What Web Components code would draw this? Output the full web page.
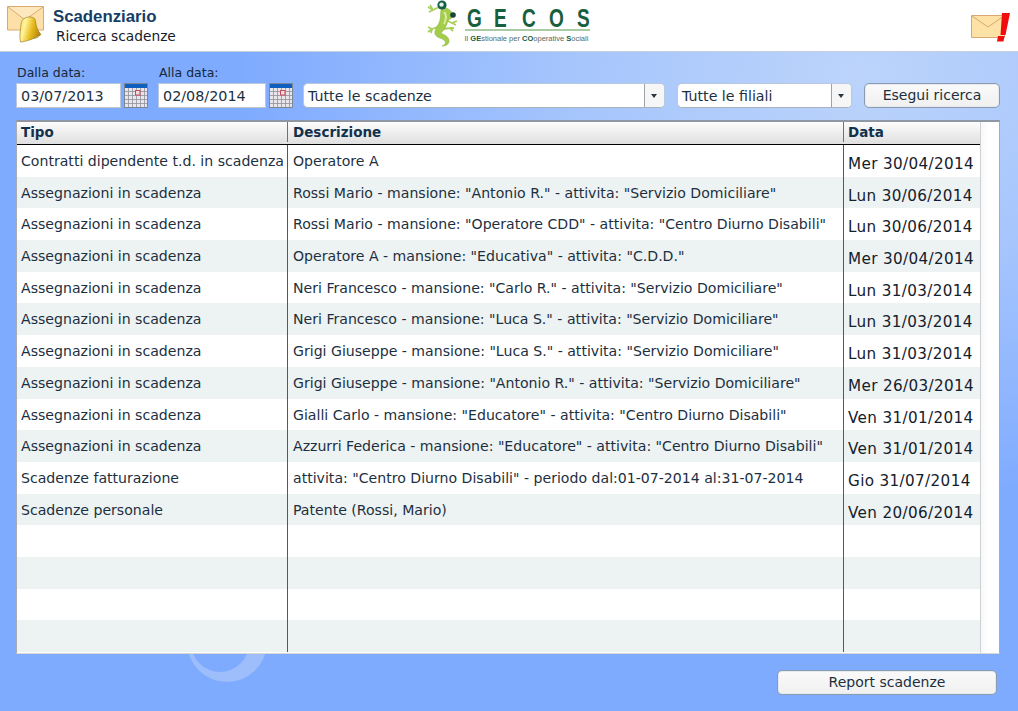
<!DOCTYPE html>
<html lang="it">
<head>
<meta charset="utf-8">
<title>Scadenziario</title>
<style>
    html, body { margin: 0; height: 100%; }
    body { font-family: "DejaVu Sans", Verdana, sans-serif; color: #1c2f3f; overflow: hidden; }
</style>
</head>
<body>
<gecos-app></gecos-app>

<script>
class AppHeader extends HTMLElement {
    constructor() {
        super();
        this.attachShadow({ mode: 'open' });
        this.shadowRoot.innerHTML = `
            <style>
                :host {
                    display: grid;
                    grid-template-columns: 1fr auto 1fr;
                    align-items: start;
                    height: 51px;
                    background: #fff;
                    border-bottom: 1px solid #c4d0e0;
                }
                .left { display: flex; padding: 5px 0 0 7px; }
                .titles { margin-left: 8px; }
                h1 { margin: 2px 0 0; font: bold 16.8px/19px "Liberation Sans", Arial, sans-serif; color: #153e66; }
                p { margin: 1px 0 0 3px; font-size: 13.75px; line-height: 18px; color: #16202a; }
                .logo { display: flex; align-items: flex-start; gap: 7px; margin-left: -3px; }
                .brand { padding-top: 6px; width: 125px; }
                .letters { display: flex; justify-content: space-between; height: 23px; font: bold 26.5px/25px "Liberation Sans", Arial, sans-serif; color: #17603d; border-bottom: 2px solid #a9cba4; }
                .letters span { display: block; width: 15px; text-align: center; transform: scaleX(.72); }
                .tag { font: 7.5px/10px "Liberation Sans", Arial, sans-serif; color: #5b6b62; margin-top: 3px; white-space: nowrap; }
                .tag b { color: #17603d; }
                .right { justify-self: end; padding: 12px 8px 0 0; }
                svg { display: block; }
            </style>
            <div class="left">
                <svg width="38" height="38" viewBox="0 0 38 38">
                    <defs>
                        <linearGradient id="gold" x1="0" y1="0" x2="1" y2=".3">
                            <stop offset="0" stop-color="#f8e26a"/>
                            <stop offset=".3" stop-color="#fff39a"/>
                            <stop offset=".65" stop-color="#e8bb1e"/>
                            <stop offset="1" stop-color="#b98c10"/>
                        </linearGradient>
                    </defs>
                    <path d="M.5 1.500h36v23.500h-36z" fill="#fde0a8" stroke="#d9ab72"/>
                    <path d="M1 2l17 13 18-13" fill="#fde8bd" stroke="#d9ab72"/>
                    <path d="M23 12c3 0 5 1 5.500 4 .5 5 2 10 5.500 13.500-5 3.500-14 7-20.500 7.500-1-5-.5-9 0-13 .5-5 1-9 3-10 2-1.500 4-2 6.500-2z" fill="url(#gold)" stroke="#8f7210" stroke-width=".6"/>
                    <path d="M27 33c2.500.5 5-1 5.500-3l-3.500 1.500z" fill="#d6c66a" stroke="#8f7210" stroke-width=".6"/>
                </svg>
                <div class="titles">
                    <h1>Scadenziario</h1>
                    <p>Ricerca scadenze</p>
                </div>
            </div>
            <div class="logo">
                <svg width="32" height="47" viewBox="7 2 32 47">
                    <path d="M20 9l-6 3-5-3M14 12l-4 2M14 12l-3-5" fill="none" stroke="#a9d15a" stroke-width="1.800"/>
                    <path d="M21 28l-8 3-4-2M13 31l-4 3M13 31l-1 4" fill="none" stroke="#a9d15a" stroke-width="1.800"/>
                    <path d="M27 22l6 3 5-2M33 25l4 2M24 31l7-1 3 3M31 30l4 0" fill="none" stroke="#a9d15a" stroke-width="1.800"/>
                    <path d="M23 9c4 0 9 3 11 7 1 3-2 5-5 6-1 6-4 10-7 13 3 2 8 3 8 8 0 4-4 5-7 5 3-1 4-3 3-5-2-3-9-3-10-7-1-5 4-9 5-14 1-4 0-9 2-13z" fill="#a5cd4c" stroke="#86ac38" stroke-width=".5"/>
                    <path d="M25 14c2 2 3 6 0 12" fill="none" stroke="#d8eca0" stroke-width="2"/>
                    <circle cx="23" cy="7" r="4.600" fill="#15604a"/>
                    <circle cx="22.500" cy="6.600" r="2.200" fill="#e4f1ea"/>
                    <circle cx="34" cy="17" r="2.800" fill="#15453a"/>
                </svg>
                <div class="brand">
                    <div class="letters"><span>G</span><span>E</span><span>C</span><span>O</span><span>S</span></div>
                    <div class="tag">Il <b>GE</b>stionale per <b>CO</b>operative <b>S</b>ociali</div>
                </div>
            </div>
            <div class="right">
                <svg width="40" height="30" viewBox="0 0 40 30">
                    <path d="M1.500 3.500h33v22h-33z" fill="#fde1a5" stroke="#d5a873"/>
                    <path d="M2 4l16 11 16-11" fill="none" stroke="#d5a873"/>
                    <path d="M32 1h8l-4.500 22h-5zM28 24h6.500l-1 5.500h-6.500z" fill="#f10d0d"/>
                </svg>
            </div>
        `;
    }
}

class DateField extends HTMLElement {
    constructor() {
        super();
        this.attachShadow({ mode: 'open' });
        this.shadowRoot.innerHTML = `
            <style>
                :host { display: block; }
                label { display: block; font-size: 12.5px; line-height: 15px; padding-left: 1px; color: #14283a; }
                .row { display: flex; gap: 3px; margin-top: 3px; }
                input {
                    width: var(--w, 105px); height: 25px; box-sizing: border-box;
                    border: 1px solid #b9c8dc; border-bottom-color: #c3c6c8; padding: 0 4px;
                    font: 14.35px "DejaVu Sans", Verdana, sans-serif; color: #1c2f3f; background: #fff;
                    outline: none; margin: 0;
                }
                svg { display: block; }
            </style>
            <label></label>
            <div class="row">
                <input type="text" readonly>
                <svg width="24" height="25" viewBox="0 0 24 25">
                    <rect x=".5" y=".5" width="23" height="24" fill="#e9e6ea" stroke="#7b8794"/>
                    <rect x="1" y="1" width="22" height="4" fill="#0f5fc0"/>
                    <path d="M1 8.500h22M1 12.500h22M1 16.500h22M1 20.500h22M4.500 5v19M8.500 5v19M12.500 5v19M16.500 5v19M20.500 5v19" stroke="#8f8f9c" fill="none" stroke-width=".8"/>
                    <rect x="11.500" y="7.500" width="4.500" height="4.500" fill="#f1d9dc" stroke="#c84a5c"/>
                </svg>
            </div>
        `;
    }
    connectedCallback() {
        this.shadowRoot.querySelector('label').textContent = this.getAttribute('label');
        this.shadowRoot.querySelector('input').value = this.getAttribute('value');
    }
}

class ComboBox extends HTMLElement {
    constructor() {
        super();
        this.attachShadow({ mode: 'open' });
        this.shadowRoot.innerHTML = `
            <style>
                :host { display: flex; height: 25px; box-sizing: border-box; background: #fff; border-radius: 5px; border: 1px solid #b7c8df; border-bottom-color: #a9b1bb; overflow: hidden; }
                .text { flex: 1; font-size: 14.2px; line-height: 24px; padding-left: 4px; color: #1c2f3f; white-space: nowrap; }
                .btn { width: 19px; border-left: 1px solid #9aa3ac; background: #f6f6f6; position: relative; }
                .btn::after { content: ""; position: absolute; left: 6px; top: 10px; border: 3.5px solid transparent; border-top: 4px solid #2b3640; border-bottom: 0; }
            </style>
            <span class="text"><slot></slot></span>
            <span class="btn"></span>
        `;
    }
}

class ActionButton extends HTMLElement {
    constructor() {
        super();
        this.attachShadow({ mode: 'open' });
        this.shadowRoot.innerHTML = `
            <style>
                :host { display: block; box-sizing: border-box; height: 25px; border: 1px solid #8b9bb0; border-radius: 5px; background: linear-gradient(#fafafa, #f0f0f0); box-shadow: inset 0 0 0 1px #e6e9ee; text-align: center; font-size: 14px; line-height: 22px; color: #1c2f3f; }
            </style>
            <slot></slot>
        `;
    }
}

class ScadenzeRow extends HTMLElement {
    constructor() {
        super();
        this.attachShadow({ mode: 'open' });
        this.shadowRoot.innerHTML = `
            <style>
                :host { display: grid; grid-template-columns: 270px 1px 555px 1px 136px; height: 100%; background: var(--row-bg, #fff); font-size: 14.1px; color: #1c2f3f; white-space: nowrap; }
                .sep { background: #55595e; }
                .c { padding: 8px 0 0 4px; line-height: 17px; overflow: hidden; }
                #desc { padding-left: 5px; }
                .d { padding: 11px 0 0 4px; line-height: 17px; font-size: 15.2px; letter-spacing: .36px; color: #14202c; }
            </style>
            <div class="c" id="tipo"></div><div class="sep"></div>
            <div class="c" id="desc"></div><div class="sep"></div>
            <div class="d" id="data"></div>
        `;
    }
    connectedCallback() {
        ['tipo', 'desc', 'data'].forEach(k => {
            this.shadowRoot.getElementById(k).textContent = this.getAttribute(k) || '';
        });
    }
}

class ScadenzeTable extends HTMLElement {
    constructor() {
        super();
        this.attachShadow({ mode: 'open' });
        this.shadowRoot.innerHTML = `
            <style>
                :host { display: grid; grid-template-columns: 1fr 18px; box-sizing: border-box; width: 984px; height: 534px; background: #fff; border: 1px solid #a7acb3; border-top: 2px solid #8e97a3; border-bottom-color: #d8d6d0; }
                .main { display: grid; grid-template-rows: 23px 507px; min-width: 0; border-right: 1px solid #cfd2d4; }
                .head { display: grid; grid-template-columns: 270px 1px 555px 1px 136px; background: linear-gradient(#fdfdfd, #dfdfdf); border-bottom: 1px solid #000; font-weight: bold; font-size: 13.5px; line-height: 20px; color: #12314c; }
                .head div { padding-left: 4px; }
                .head div:nth-of-type(2) { padding-left: 5px; }
                .head i { background: #6e7277; margin-bottom: 2px; }
                .rows { display: grid; grid-template-rows: repeat(16, 1fr); min-height: 0; }
                .bar { background: linear-gradient(90deg, #f7f7f7, #fff 40%); }
                ::slotted(scadenze-row:nth-child(even)) { --row-bg: #edf2f2; }
            </style>
            <div class="main">
                <div class="head"><div>Tipo</div><i></i><div>Descrizione</div><i></i><div>Data</div></div>
                <div class="rows"><slot></slot></div>
            </div>
            <div class="bar"></div>
        `;
    }
}

const RIGHE = [
    ['Contratti dipendente t.d. in scadenza', 'Operatore A', 'Mer 30/04/2014'],
    ['Assegnazioni in scadenza', 'Rossi Mario - mansione: "Antonio R." - attivita: "Servizio Domiciliare"', 'Lun 30/06/2014'],
    ['Assegnazioni in scadenza', 'Rossi Mario - mansione: "Operatore CDD" - attivita: "Centro Diurno Disabili"', 'Lun 30/06/2014'],
    ['Assegnazioni in scadenza', 'Operatore A - mansione: "Educativa" - attivita: "C.D.D."', 'Mer 30/04/2014'],
    ['Assegnazioni in scadenza', 'Neri Francesco - mansione: "Carlo R." - attivita: "Servizio Domiciliare"', 'Lun 31/03/2014'],
    ['Assegnazioni in scadenza', 'Neri Francesco - mansione: "Luca S." - attivita: "Servizio Domiciliare"', 'Lun 31/03/2014'],
    ['Assegnazioni in scadenza', 'Grigi Giuseppe - mansione: "Luca S." - attivita: "Servizio Domiciliare"', 'Lun 31/03/2014'],
    ['Assegnazioni in scadenza', 'Grigi Giuseppe - mansione: "Antonio R." - attivita: "Servizio Domiciliare"', 'Mer 26/03/2014'],
    ['Assegnazioni in scadenza', 'Gialli Carlo - mansione: "Educatore" - attivita: "Centro Diurno Disabili"', 'Ven 31/01/2014'],
    ['Assegnazioni in scadenza', 'Azzurri Federica - mansione: "Educatore" - attivita: "Centro Diurno Disabili"', 'Ven 31/01/2014'],
    ['Scadenze fatturazione', 'attivita: "Centro Diurno Disabili" - periodo dal:01-07-2014 al:31-07-2014', 'Gio 31/07/2014'],
    ['Scadenze personale', 'Patente (Rossi, Mario)', 'Ven 20/06/2014'],
    [], [], [], []
];

class GecosApp extends HTMLElement {
    constructor() {
        super();
        this.attachShadow({ mode: 'open' });
        this.shadowRoot.innerHTML = `
            <style>
                :host { display: flex; flex-direction: column; height: 711px; }
                main {
                    flex: 1; position: relative; overflow: hidden; padding: 11px 0 0 16px;
                    background:
                        radial-gradient(ellipse 620px 430px at 860px 20px, #bcd4fb 0%, rgba(188,212,251,.65) 45%, rgba(188,212,251,0) 100%),
                        #7fabff;
                }
                .ring { position: absolute; left: 170px; top: 570px; }
                .filters { display: flex; align-items: flex-end; position: relative; height: 45px; }
                .table { position: relative; margin-top: 12px; }
                .foot { position: relative; display: flex; justify-content: flex-end; margin: 16px 21px 0 0; }
            </style>
            <app-header></app-header>
            <main>
                <svg class="ring" width="100" height="70" viewBox="0 0 100 70">
                    <path fill-rule="evenodd" fill="#9dbdfb" d="M17 20a40 40 0 1 0 80 0a40 40 0 1 0-80 0zM21 21a29 29 0 1 0 58 0a29 29 0 1 0-58 0z"/>
                </svg>
                <div class="filters">
                    <date-field label="Dalla data:" value="03/07/2013" style="--w:105px"></date-field>
                    <date-field label="Alla data:" value="02/08/2014" style="--w:108px;margin-left:10px"></date-field>
                    <combo-box style="width:362px;margin-left:10px">Tutte le scadenze</combo-box>
                    <combo-box style="width:175px;margin-left:12px">Tutte le filiali</combo-box>
                    <action-button style="width:136px;margin-left:12px">Esegui ricerca</action-button>
                </div>
                <div class="table"><scadenze-table id="t"></scadenze-table></div>
                <div class="foot"><action-button style="width:220px">Report scadenze</action-button></div>
            </main>
        `;
        const t = this.shadowRoot.getElementById('t');
        RIGHE.forEach(r => {
            const row = document.createElement('scadenze-row');
            row.setAttribute('tipo', r[0] || '');
            row.setAttribute('desc', r[1] || '');
            row.setAttribute('data', r[2] || '');
            t.appendChild(row);
        });
    }
}

customElements.define('app-header', AppHeader);
customElements.define('date-field', DateField);
customElements.define('combo-box', ComboBox);
customElements.define('action-button', ActionButton);
customElements.define('scadenze-row', ScadenzeRow);
customElements.define('scadenze-table', ScadenzeTable);
customElements.define('gecos-app', GecosApp);
</script>
</body>
</html>
